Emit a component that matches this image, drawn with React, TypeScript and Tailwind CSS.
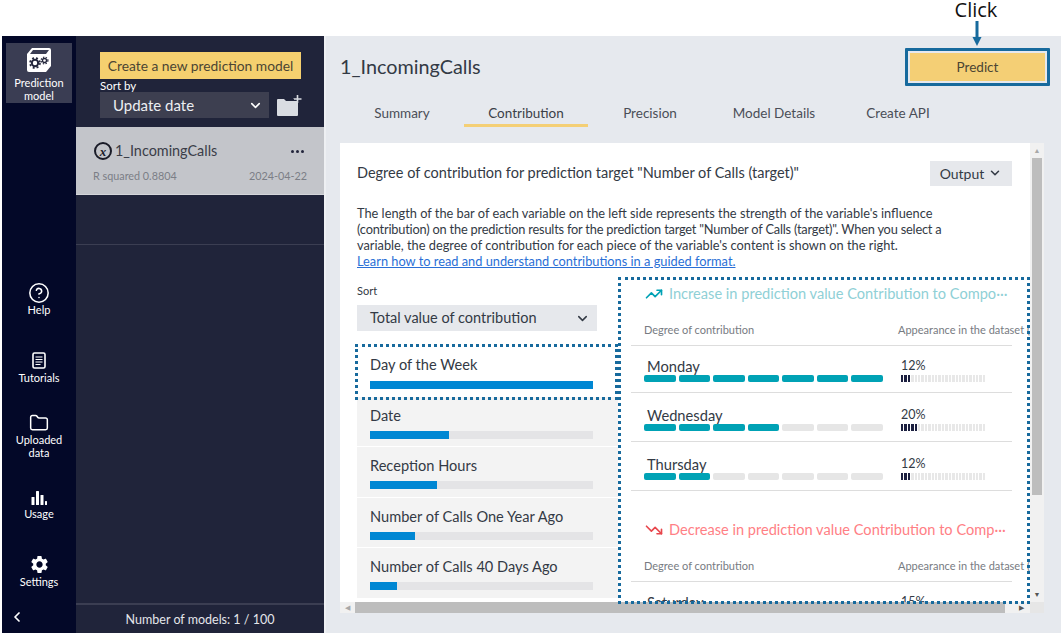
import { ChevronDown, ChevronLeft, CircleHelp, Folder, TrendingDown, TrendingUp } from 'lucide-react';
import { MdSettings } from 'react-icons/md';

const font = 'font-["Lato","Liberation_Sans",sans-serif]';

function CubeIcon() {
  return (
    <svg width="26" height="26" viewBox="0 0 26 26">
      <path d="M6 1h17a2 2 0 0 1 2 2v16l-5 6H3a2 2 0 0 1-2-2V7z" fill="#fff" />
      <path d="M7 3h16l-3 4H4z" fill="#3a3d53" />
      <circle cx="9" cy="16" r="3.2" fill="none" stroke="#23263c" strokeWidth="2" />
      <circle cx="9" cy="16" r="5" fill="none" stroke="#23263c" strokeWidth="1.6" strokeDasharray="2 2" />
      <circle cx="18.5" cy="13.5" r="2" fill="none" stroke="#23263c" strokeWidth="1.3" />
      <circle cx="18.5" cy="13.5" r="3.4" fill="none" stroke="#23263c" strokeWidth="1.2" strokeDasharray="1.4 1.4" />
    </svg>
  );
}

function TutorialIcon() {
  return (
    <svg width="14" height="17" viewBox="0 0 14 17" fill="none" stroke="#fff">
      <rect x="1" y="1" width="12" height="15" rx="1.5" strokeWidth="1.6" />
      <path d="M3.5 5h7M3.5 7.5h7M3.5 10h7M3.5 12.5h5" strokeWidth="1.2" />
    </svg>
  );
}

function UsageIcon() {
  return (
    <svg width="16" height="16" viewBox="0 0 16 16" fill="#fff">
      <rect x="0.5" y="7" width="3" height="8" rx="0.5" />
      <rect x="5" y="1" width="3" height="14" rx="0.5" />
      <rect x="9.5" y="5" width="3" height="10" rx="0.5" />
      <rect x="14" y="11" width="2" height="4" rx="0.5" />
    </svg>
  );
}

function FolderPlusIcon() {
  return (
    <svg width="25" height="21" viewBox="0 0 25 21">
      <path d="M0 5a1 1 0 0 1 1-1h6l2 2h12v14a1 1 0 0 1-1 1H1a1 1 0 0 1-1-1z" fill="#d9dce2" />
      <path d="M20.5 0v8M16.5 4h8" stroke="#d9dce2" strokeWidth="1.6" />
      <path d="M16 4h1v2h-1z" fill="#20243a" />
    </svg>
  );
}

function NavItem({ icon, label, className }: { icon: React.ReactNode; label: React.ReactNode; className: string }) {
  return (
    <div className={`flex flex-col items-center text-[11px] leading-[13px] text-white text-center ${className}`}>
      {icon}
      <span>{label}</span>
    </div>
  );
}

function VariableRow({ label, pct, selected }: { label: string; pct: number; selected?: boolean }) {
  return (
    <div className={`pl-[13px] pr-[25px] ${selected ? 'h-[52px] pt-[10px] bg-white' : 'h-[49.4px] pt-[9px] bg-[#f3f3f3] mb-[1px]'}`}>
      <div className="text-[14.6px] leading-[20px] text-[#333a45]">{label}</div>
      <div className={`h-[8px] bg-[#e4e4e6] ${selected ? 'mt-[6px]' : 'mt-[5px]'}`}>
        <div className="h-full bg-[#0087d3]" style={{ width: `${pct}%` }} />
      </div>
    </div>
  );
}

function ContributionRow({ label, filled, percent, first }: { label: string; filled: number; percent: number; first?: boolean }) {
  return (
    <div className={`border-b-[1.5px] border-[#dddddd] flex ${first ? 'h-[47px] pt-[12px]' : 'h-[49px] pt-[14px]'}`}>
      <div className="w-[253px] pl-[13px]">
        <div className="pl-[3px] text-[14.7px] leading-[16px] text-[#333a45]">{label}</div>
        <div className="flex gap-[3px] mt-[1px]">
          {[0, 1, 2, 3, 4, 5, 6].map((i) => (
            <div key={i} className={`w-[31.5px] h-[7px] rounded-[2px] ${i < filled ? 'bg-[#00a2b5]' : 'bg-[#e6e6e6]'}`} />
          ))}
        </div>
      </div>
      <div className="w-[84px] ml-[17px]">
        <div className="text-[12.5px] leading-[16px] text-[#333a45]">{percent}%</div>
        <div className="flex gap-[1px] h-[7px] mt-[1px]">
          {Array.from({ length: 25 }).map((_, i) => (
            <div key={i} className={`flex-1 ${i < percent / 4 ? 'bg-[#1c2040]' : 'bg-[#e8e8e8]'}`} />
          ))}
        </div>
      </div>
    </div>
  );
}

function TableHeader() {
  return (
    <div className="mt-[6px] h-[35px] pt-[11px] border-b-[1.5px] border-[#dddddd] flex text-[11px] leading-[16px] text-[#777b82] whitespace-nowrap">
      <span className="w-[267px] shrink-0 pl-[13px]">Degree of contribution</span>
      <span className="shrink-0">Appearance in the dataset (</span>
    </div>
  );
}

const tabs = ['Summary', 'Contribution', 'Precision', 'Model Details', 'Create API'];

export default function App() {
  return (
    <div className={`relative w-[1061px] h-[633px] overflow-hidden bg-white flex flex-col ${font}`}>
      {/* callout */}
      <div className="absolute left-[946px] top-0 w-[60px] text-center text-[20px] leading-[20px] text-[#111] font-['Open_Sans',sans-serif]">Click</div>
      <svg className="absolute left-[971px] top-[21px]" width="12" height="26" viewBox="0 0 12 26">
        <path d="M6 0v20" stroke="#176a9d" strokeWidth="3" />
        <path d="M1.5 16h9L6 25z" fill="#176a9d" />
      </svg>

      <div className="h-[36px] shrink-0" />
      <div className="flex flex-1 min-h-0 pl-[2px]">
        {/* nav rail */}
        <div className="w-[74px] shrink-0 bg-[#030828] flex flex-col items-center relative">
          <div className="mt-[7px] w-[66px] h-[60px] bg-[#3a3d53] flex flex-col items-center pt-[4px] text-[11px] leading-[13px] text-white text-center">
            <CubeIcon />
            <div className="mt-[3px]">Prediction<br />model</div>
          </div>
          <NavItem className="mt-[179px]" icon={<CircleHelp size={22} color="#fff" strokeWidth={1.7} className="mb-[-1px]" />} label="Help" />
          <NavItem className="mt-[36px]" icon={<div className="mb-[2px]"><TutorialIcon /></div>} label="Tutorials" />
          <NavItem className="mt-[29px]" icon={<Folder size={20} color="#fff" strokeWidth={1.8} />} label={<>Uploaded<br />data</>} />
          <NavItem className="mt-[31px]" icon={<div className="mb-[1px]"><UsageIcon /></div>} label="Usage" />
          <NavItem className="mt-[34px]" icon={<MdSettings size={21} color="#fff" />} label="Settings" />
          <ChevronLeft size={16} color="#fff" strokeWidth={2.6} className="absolute left-[7px] bottom-[8px]" />
        </div>

        {/* model list panel */}
        <div className="w-[248px] shrink-0 bg-[#20243a] flex flex-col">
          <div className="pl-[24px] pt-[16px]">
            <div className="w-[201px] h-[27px] bg-[#f5d06f] text-[13.8px] leading-[27px] text-center text-[#4b4533]">Create a new prediction model</div>
            <div className="text-[11.5px] leading-[13px] text-white">Sort by</div>
            <div className="flex items-center">
              <div className="w-[169px] h-[26px] bg-[#3d3f50] pl-[13px] pr-[6px] flex items-center justify-between text-[15px] text-[#eceef2]">
                Update date
                <ChevronDown size={15} color="#fff" strokeWidth={2.5} />
              </div>
              <div className="ml-[8px]"><FolderPlusIcon /></div>
            </div>
          </div>
          <div className="mt-[9px] h-[68px] bg-[#c3c5ca] border-b border-[#d4d6da] px-[17px] pt-[14px]">
            <div className="flex items-center">
              <div className="w-[18px] h-[18px] ml-[1px] rounded-full border-2 border-[#1a1c28] flex items-center justify-center text-[13px] leading-none italic font-bold text-[#1a1c28] font-['Liberation_Serif',serif]">x</div>
              <span className="ml-[3px] text-[14.4px] leading-[20px] text-[#3a3d48]">1_IncomingCalls</span>
              <div className="ml-auto mr-[3px] flex gap-[2px]">
                <div className="w-[3px] h-[3px] rounded-full bg-[#23263c]" />
                <div className="w-[3px] h-[3px] rounded-full bg-[#23263c]" />
                <div className="w-[3px] h-[3px] rounded-full bg-[#23263c]" />
              </div>
            </div>
            <div className="mt-[7px] flex justify-between text-[10.8px] leading-[16px] text-[#7b7e86]">
              <span>R squared 0.8804</span>
              <span>2024-04-22</span>
            </div>
          </div>
          <div className="h-[50px] border-b border-[#3b3e52]" />
          <div className="flex-1" />
          <div className="h-[30px] border-t-2 border-[#3b3e52] text-center text-[12.5px] leading-[30px] text-[#e4e6ea]">Number of models: 1 / 100</div>
        </div>

        {/* main */}
        <div className="flex-1 bg-[#e6e9ee] pl-[14px] flex flex-col min-w-0 border-l-2 border-l-[#eef0f3]">
          <div className="h-[61px] flex items-center justify-between pr-[11px]">
            <div className="text-[19.8px] leading-[26px] mt-[-1px] text-[#333a45]">1_IncomingCalls</div>
            <div className="w-[145px] h-[38px] border-[3px] border-[#176a9d] rounded-[1px] bg-[#e6e9ee] p-[2px]">
              <div className="w-full h-full bg-[#f4cf75] text-[13.5px] leading-[28px] text-center text-[#4b4533]">Predict</div>
            </div>
          </div>
          <div className="h-[46px] flex text-[13.5px] text-[#4a4e57]">
            {tabs.map((tab) => (
              <div key={tab} className={`w-[124px] h-[30px] pt-[6px] text-center ${tab === 'Contribution' ? 'border-b-[3px] border-[#f4cf75] text-[#3b3f48]' : ''}`}>
                {tab}
              </div>
            ))}
          </div>

          {/* card */}
          <div className="relative w-[704px] h-[470px] bg-white flex flex-col overflow-hidden">
            <div className="flex flex-1 min-h-0">
              <div className="relative flex-1 min-w-0 overflow-hidden">
                <div className="pl-[17px] pr-[16px] pt-[17px] flex items-center justify-between h-[43px]">
                  <div className="text-[14.5px] text-[#333a45]">Degree of contribution for prediction target "Number of Calls (target)"</div>
                  <div className="w-[82px] h-[25px] bg-[#e6e8ec] flex items-center justify-center gap-[4px] text-[14px] text-[#333a45] mr-[2px]">
                    Output
                    <ChevronDown size={14} strokeWidth={2.6} />
                  </div>
                </div>
                <div className="pl-[17px] mt-[19px] text-[12.8px] leading-[16px] text-[#333a45] whitespace-nowrap">
                  <p>
                    The length of the bar of each variable on the left side represents the strength of the variable's influence
                    <br />
                    <span className="tracking-[-0.2px]">(contribution) on the prediction results for the prediction target "Number of Calls (target)". When you select a</span>
                    <br />
                    variable, the degree of contribution for each piece of the variable's content is shown on the right.
                  </p>
                  <a className="text-[#2a6fd6] underline">Learn how to read and understand contributions in a guided format.</a>
                </div>

                <div className="flex">
                  <div className="w-[278px] shrink-0 pl-[17px]">
                    <div className="mt-[14px] text-[11px] leading-[16px] text-[#333a45]">Sort</div>
                    <div className="mt-[6px] w-[240px] h-[26px] bg-[#e6e8ec] pl-[13px] pr-[7px] flex items-center justify-between text-[14.5px] text-[#333a45]">
                      Total value of contribution
                      <ChevronDown size={15} strokeWidth={2.4} />
                    </div>
                    <div className="mt-[14px]">
                      <VariableRow label="Day of the Week" pct={100} selected />
                      <VariableRow label="Date" pct={35.5} />
                      <VariableRow label="Reception Hours" pct={30} />
                      <VariableRow label="Number of Calls One Year Ago" pct={20} />
                      <VariableRow label="Number of Calls 40 Days Ago" pct={12} />
                    </div>
                  </div>
                  <div className="flex-1 min-w-0 pl-[13px] pt-[14px] pr-[18px] overflow-hidden">
                    <div className="h-[22px] pl-[14px] flex items-center text-[14.6px] whitespace-nowrap text-[#8fd0d6]">
                      <TrendingUp size={18} color="#00a2b5" strokeWidth={2.2} className="mr-[6px] shrink-0" />
                      Increase in prediction value Contribution to Compo···
                    </div>
                    <TableHeader />
                    <ContributionRow label="Monday" filled={7} percent={12} first />
                    <ContributionRow label="Wednesday" filled={4} percent={20} />
                    <ContributionRow label="Thursday" filled={2} percent={12} />
                    <div className="mt-[28px] h-[22px] pl-[14px] flex items-center text-[14.6px] whitespace-nowrap text-[#ff8085]">
                      <TrendingDown size={18} color="#e8474d" strokeWidth={2.2} className="mr-[6px] shrink-0" />
                      Decrease in prediction value Contribution to Comp···
                    </div>
                    <TableHeader />
                    <ContributionRow label="Saturday" filled={2} percent={15} first />
                  </div>
                </div>
              </div>
              {/* vertical scrollbar */}
              <div className="w-[14px] shrink-0 bg-[#f1f1f1] flex flex-col items-center">
                <div className="h-[15px] text-[7px] leading-[15px] text-[#a8a8a8]">▲</div>
                <div className="w-[10px] h-[337px] bg-[#bdbdbd]" />
                <div className="mt-auto h-[15px] text-[7px] leading-[15px] text-[#555]">▼</div>
              </div>
            </div>
            {/* horizontal scrollbar */}
            <div className="h-[11px] shrink-0 bg-[#f1f1f1] flex items-center">
              <div className="w-[15px] text-[7px] text-center text-[#a8a8a8]">◀</div>
              <div className="w-[650px] h-full bg-[#bdbdbd]" />
              <div className="ml-[14px] w-[11px] text-[7px] text-[#555]">▶</div>
              <div className="ml-auto w-[14px] h-full bg-[#e6e6e6]" />
            </div>
          </div>
        </div>
      </div>

      {/* dotted callouts */}
      <div className="absolute left-[355px] top-[344px] w-[263px] h-[56px] border-[3px] border-dotted border-[#176a9d]" />
      <div className="absolute left-[618px] top-[277px] w-[412px] h-[327px] border-[3px] border-dotted border-[#176a9d]" />
    </div>
  );
}
